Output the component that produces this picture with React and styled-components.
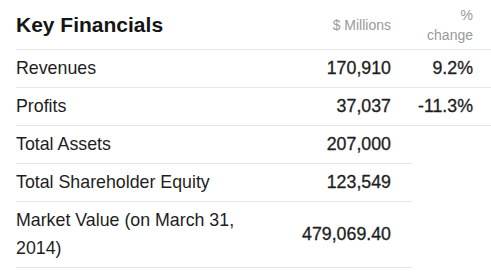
import styled, { createGlobalStyle } from "styled-components";

const GlobalStyle = createGlobalStyle`
  body {
    margin: 0;
    background: #ffffff;
    font-family: "Liberation Sans", Arial, sans-serif;
    color: #1c1c1c;
    overflow: hidden;
  }
`;

const Wrapper = styled.div`
  padding-left: 16px;
`;

const Table = styled.table`
  width: 475px;
  border-collapse: collapse;
  table-layout: fixed;
`;

const HeadCell = styled.th`
  height: 49px;
  padding: 0 ${(p) => p.$pr || 0}px 0 0;
  border-bottom: 1px solid #e6e6e6;
  vertical-align: middle;
  text-align: ${(p) => (p.$right ? "right" : "left")};
  font-weight: normal;
`;

const Title = styled.span`
  font-size: 21px;
  font-weight: bold;
  color: #151515;
`;

const ColLabel = styled.span`
  display: block;
  font-size: 14px;
  line-height: 20px;
  color: #9a9a9a;
`;

const Cell = styled.td`
  padding: 4px ${(p) => p.$pr || 0}px 5px 0;
  border-bottom: 1px solid #e6e6e6;
  font-size: 17.8px;
  line-height: 28px;
  vertical-align: middle;
  text-align: ${(p) => (p.$right ? "right" : "left")};
  color: #1e1e1e;
`;

const Value = styled(Cell)`
  -webkit-text-stroke: 0.3px #1e1e1e;
`;

const rows = [
  { label: "Revenues", value: "170,910", change: "9.2%" },
  { label: "Profits", value: "37,037", change: "-11.3%" },
  { label: "Total Assets", value: "207,000" },
  { label: "Total Shareholder Equity", value: "123,549" },
  { label: "Market Value (on March 31, 2014)", value: "479,069.40" },
];

const App = () => {
  return (
    <Wrapper>
      <GlobalStyle />
      <Table>
        <colgroup>
          <col style={{ width: 254 }} />
          <col style={{ width: 142 }} />
          <col style={{ width: 79 }} />
        </colgroup>
        <thead>
          <tr>
            <HeadCell>
              <Title>Key Financials</Title>
            </HeadCell>
            <HeadCell $right $pr={21}>
              <ColLabel>$ Millions</ColLabel>
            </HeadCell>
            <HeadCell $right $pr={18}>
              <ColLabel>%</ColLabel>
              <ColLabel>change</ColLabel>
            </HeadCell>
          </tr>
        </thead>
        <tbody>
          {rows.map((row) => (
            <tr key={row.label}>
              <Cell>{row.label}</Cell>
              <Value $right $pr={21}>
                {row.value}
              </Value>
              {row.change && (
                <Value $right $pr={18}>
                  {row.change}
                </Value>
              )}
            </tr>
          ))}
        </tbody>
      </Table>
    </Wrapper>
  );
};

export default App;
